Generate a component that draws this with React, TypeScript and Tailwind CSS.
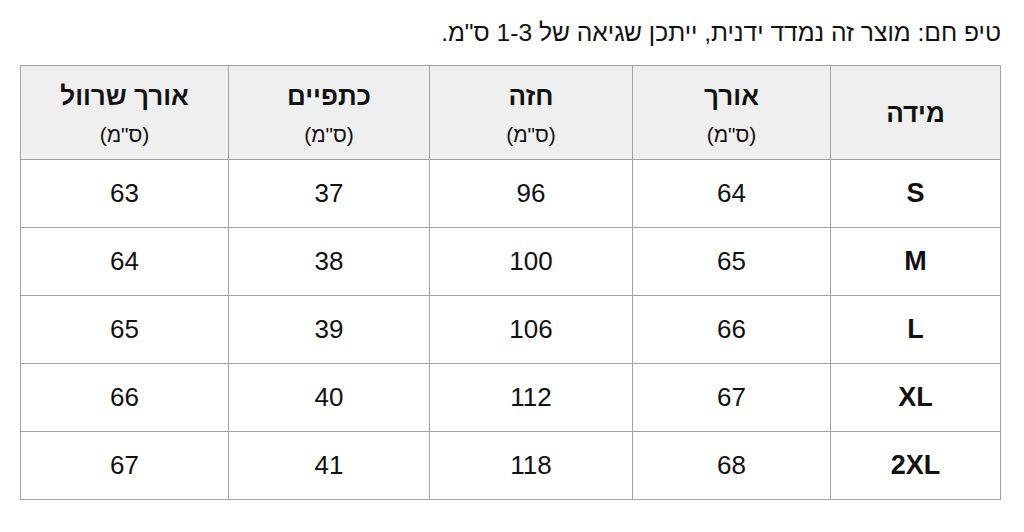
const headers = [
  { title: "מידה", unit: false, w: "w-[170px]" },
  { title: "אורך", unit: true, w: "w-[198px]" },
  { title: "חזה", unit: true, w: "w-[203px]" },
  { title: "כתפיים", unit: true, w: "w-[201px]" },
  { title: "אורך שרוול", unit: true, w: "w-[208px]" },
];

const rows = [
  ["S", 64, 96, 37, 63],
  ["M", 65, 100, 38, 64],
  ["L", 66, 106, 39, 65],
  ["XL", 67, 112, 40, 66],
  ["2XL", 68, 118, 41, 67],
];

export default function App() {
  return (
    <div
      dir="rtl"
      className="w-[1024px] h-[532px] bg-white text-[#111] pr-[23px] pl-[21px] pt-[18px]"
      style={{ fontFamily: '"Liberation Sans", Arial, sans-serif' }}
    >
      <p className="text-[24.6px] leading-[30px] mb-[17px]">
        טיפ חם: מוצר זה נמדד ידנית, ייתכן שגיאה של 1-3 ס"מ.
      </p>
      <table className="border-collapse w-[980px] table-fixed">
        <thead>
          <tr className="h-[94px] bg-[#efefef]">
            {headers.map((h) => (
              <th key={h.title} className={`${h.w} border border-[#a3a3a3] text-center align-middle p-0`}>
                <div className={`text-[26px] font-bold leading-[30px] ${h.unit ? "pt-[3px]" : ""}`}>{h.title}</div>
                {h.unit && <div className="text-[21px] font-normal leading-[24px] mt-[12px]">(ס"מ)</div>}
              </th>
            ))}
          </tr>
        </thead>
        <tbody>
          {rows.map((r) => (
            <tr key={r[0]} className="h-[68px]">
              {r.map((c, i) => (
                <td
                  key={i}
                  className={`border border-[#a3a3a3] text-center align-middle p-0 ${i === 0 ? "font-bold text-[27px]" : "text-[26px]"}`}
                >
                  {c}
                </td>
              ))}
            </tr>
          ))}
        </tbody>
      </table>
    </div>
  );
}
